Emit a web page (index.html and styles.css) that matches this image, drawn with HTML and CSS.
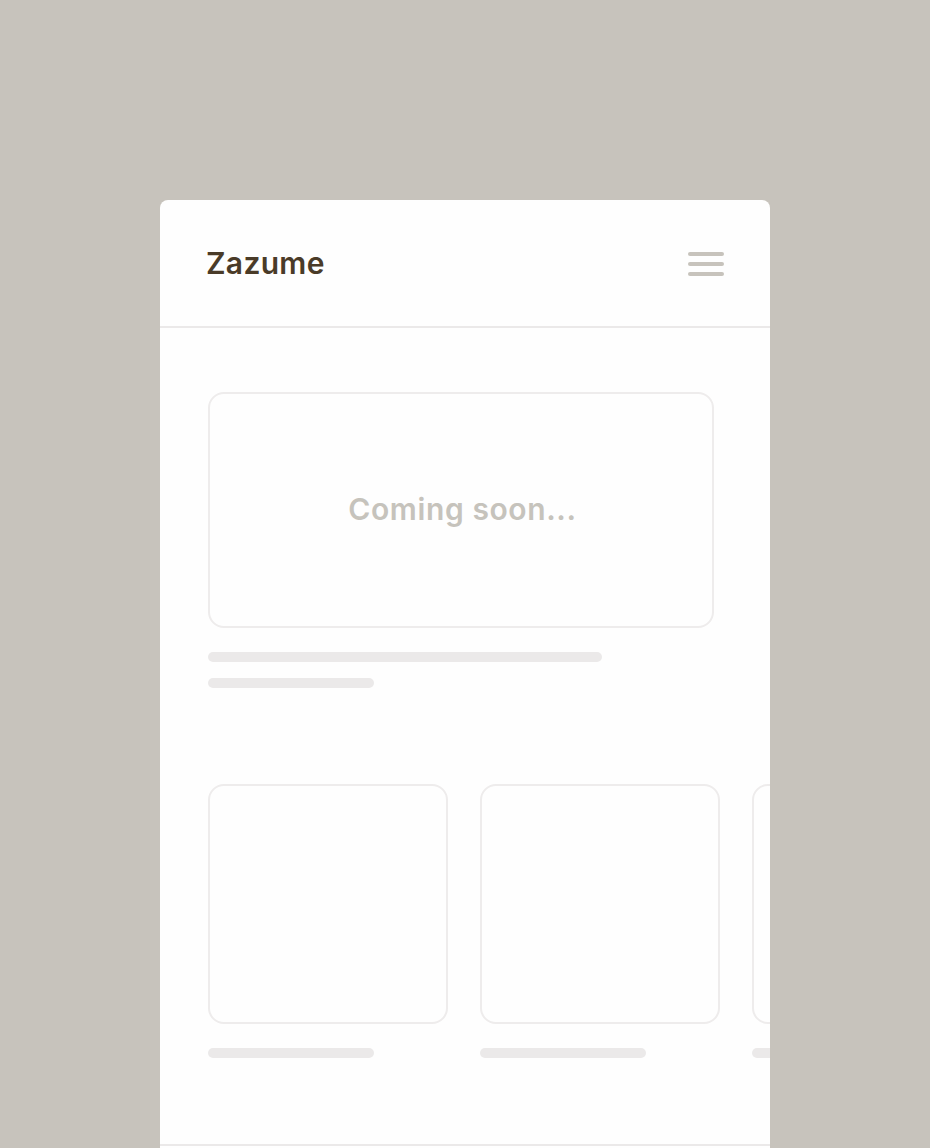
FILE: index.html
```html
<!DOCTYPE html>
<html lang="en">
<head>
<meta charset="utf-8">
<title>Zazume</title>
<link rel="stylesheet" href="styles.css">
</head>
<body>
  <div class="phone">
    <header class="topbar">
      <div class="logo">Zazume</div>
      <div class="menu" aria-label="Menu">
        <span></span><span></span><span></span>
      </div>
    </header>
    <main class="content">
      <section class="hero">
        <div class="hero-card">Coming soon...</div>
        <div class="bar bar-long"></div>
        <div class="bar bar-short"></div>
      </section>
      <section class="row">
        <div class="item">
          <div class="tile"></div>
          <div class="bar bar-short"></div>
        </div>
        <div class="item">
          <div class="tile"></div>
          <div class="bar bar-short"></div>
        </div>
        <div class="item">
          <div class="tile"></div>
          <div class="bar bar-short"></div>
        </div>
      </section>
      <div class="bottom-line"></div>
    </main>
  </div>
</body>
</html>
```
FILE: styles.css
```css
* { box-sizing: border-box; }
html, body {
  margin: 0;
  padding: 0;
  background: #c7c3bc;
  height: 100%;
  overflow: hidden;
}
body {
  font-family: "Inter", "Liberation Sans", sans-serif;
}
.phone {
  width: 610px;
  margin: 200px 0 0 160px;
  height: 960px;
  background: #fefefe;
  border-radius: 8px 8px 0 0;
  overflow: hidden;
}
.topbar {
  height: 128px;
  border-bottom: 2px solid #ebe9e9;
  display: flex;
  align-items: center;
  justify-content: space-between;
  padding: 0 46px 0 46px;
}
.logo {
  font-size: 30px;
  font-weight: 600;
  color: #4a3b28;
  letter-spacing: 0.3px;
  margin-top: 0;
}
.menu {
  width: 36px;
  display: flex;
  flex-direction: column;
  gap: 6px;
  margin-top: 2px;
}
.menu span {
  display: block;
  height: 4px;
  border-radius: 2px;
  background: #c7c3bc;
}
.content {
  padding: 64px 0 0 48px;
  height: 818px;
  display: flex;
  flex-direction: column;
}
.hero {
  display: flex;
  flex-direction: column;
}
.hero-card {
  width: 506px;
  height: 236px;
  border: 2px solid #eeecec;
  border-radius: 16px;
  display: flex;
  align-items: center;
  justify-content: center;
  font-size: 30px;
  font-weight: 600;
  color: #c6c3bc;
  letter-spacing: 0.6px;
  padding: 0 0 2px 3px;
}
.bar {
  height: 10px;
  border-radius: 5px;
  background: #ebe9e9;
}
.hero .bar-long {
  width: 394px;
  margin-top: 24px;
}
.hero .bar-short {
  width: 166px;
  margin-top: 16px;
}
.row {
  margin-top: 96px;
  display: flex;
  gap: 32px;
}
.item {
  flex: none;
  width: 240px;
  display: flex;
  flex-direction: column;
}
.tile {
  height: 240px;
  border: 2px solid #eeecec;
  border-radius: 16px;
}
.item .bar-short {
  width: 166px;
  margin-top: 24px;
}
.bottom-line {
  margin-top: auto;
  margin-left: -48px;
  height: 2px;
  background: #ebe9e9;
}
```
